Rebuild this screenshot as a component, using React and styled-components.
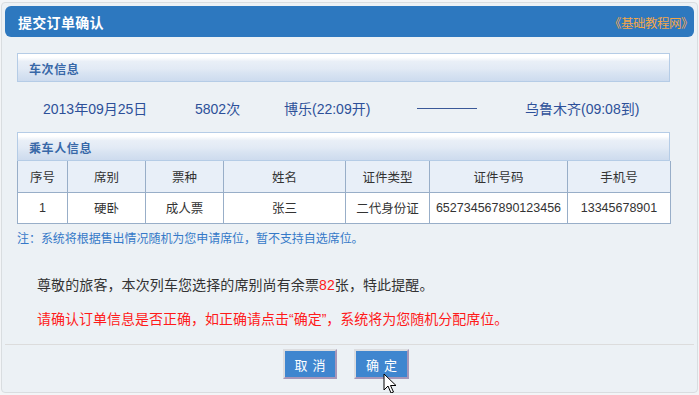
import React from "react";
import styled, { createGlobalStyle } from "styled-components";

const Global = createGlobalStyle`
  html, body { margin: 0; padding: 0; background: #f3f5f7; }
  body { font-family: "Liberation Sans", "Noto Sans CJK SC", sans-serif; }
  * { box-sizing: border-box; }
`;

const Dialog = styled.div`
  position: relative;
  margin: 2px 0 0 1px;
  width: 697px;
  height: 391px;
  background: #ecf1f5;
  border: 1px solid #d9dde0;
  border-radius: 4px;
  padding: 3px;
  display: flex;
  flex-direction: column;
`;

const TitleBar = styled.div`
  height: 31px;
  background: #2d78bf;
  border-radius: 6px;
  display: flex;
  align-items: center;
  justify-content: space-between;
  padding: 0 1px 0 13px;
`;

const Title = styled.span`
  color: #fff;
  font-size: 14px;
  font-weight: bold;
  letter-spacing: 0.3px;
`;

const SiteLink = styled.span`
  color: #f2a64a;
  font-size: 12.5px;
  font-family: "Noto Sans CJK SC", sans-serif;
  letter-spacing: -0.5px;
  margin-top: 2px;
`;

const Content = styled.div`
  padding: 16px 24px 0 12px;
  flex: 1;
`;

const SectionHead = styled.div`
  height: 29px;
  border: 1px solid #b5cce6;
  background: linear-gradient(#ffffff 0, #ffffff 12%, #e9eff7 28%, #e2eaf5 55%, #d9e4f2 70%, #cddbee 100%);
  display: flex;
  align-items: center;
  padding: 1px 0 0 11px;
  color: #3868a8;
  font-size: 12px;
  font-weight: bold;
  letter-spacing: 0.6px;
`;

const TrainRow = styled.div`
  height: 50px;
  display: grid;
  grid-template-columns: 152px 89px 133px 108px auto;
  align-items: center;
  padding: 2px 0 0 26px;
  color: #2d5099;
  font-size: 14px;
`;

const Dash = styled.span`
  display: block;
  width: 60px;
  height: 1px;
  background: #3a5898;
`;

const Table = styled.table`
  width: 100%;
  border-collapse: collapse;
  table-layout: fixed;
  font-size: 12.5px;
  color: #333;
  border: 1px solid #98aec8;
  border-top: none;
`;

const Th = styled.th`
  height: 31px;
  background: #e8eff8;
  font-weight: normal;
  border: 1px solid #98aec8;
  border-top: none;
  text-align: center;
  padding: 0;
`;

const Td = styled.td`
  height: 31px;
  background: #fff;
  border: 1px solid #98aec8;
  text-align: center;
  padding: 0;
`;

const Note = styled.div`
  margin-top: 7px;
  line-height: 16px;
  color: #3579c8;
  font-size: 12px;
  letter-spacing: -0.05px;
`;

const Message = styled.p`
  margin: ${(p) => p.$top}px 0 0 20px;
  line-height: 20px;
  font-size: 14px;
  letter-spacing: ${(p) => (p.$warn ? "0px" : "0.1px")};
  color: ${(p) => (p.$warn ? "#ff1a1a" : "#333")};
`;

const Red = styled.span`
  color: #ff1a1a;
`;

const Footer = styled.div`
  border-top: 1px solid #dcdcdc;
  height: 45px;
  display: flex;
  justify-content: center;
  align-items: flex-start;
  gap: 17px;
  padding: 4px 7px 0 0;
`;

const Button = styled.button`
  width: ${(p) => p.$w}px;
  height: 30px;
  background: #3f86cf;
  color: #fff;
  font-family: "Noto Sans CJK SC", sans-serif;
  font-size: 13px;
  letter-spacing: 5px;
  padding: 0 0 0 5px;
  border-style: solid;
  border-width: 2px;
  border-color: #dcdde0 #a796b8 #a796b8 #dcdde0;
  cursor: default;
`;

const Cursor = styled.svg`
  position: absolute;
  left: 381px;
  top: 370px;
`;

const cols = [50, 78, 78, 122, 84, 138, 103];
const heads = ["序号", "席别", "票种", "姓名", "证件类型", "证件号码", "手机号"];
const row = ["1", "硬卧", "成人票", "张三", "二代身份证", "652734567890123456", "13345678901"];

export default function App() {
  return (
    <>
      <Global />
      <Dialog>
        <TitleBar>
          <Title>提交订单确认</Title>
          <SiteLink>《基础教程网》</SiteLink>
        </TitleBar>
        <Content>
          <SectionHead>车次信息</SectionHead>
          <TrainRow>
            <span>2013年09月25日</span>
            <span>5802次</span>
            <span>博乐(22:09开)</span>
            <Dash />
            <span>乌鲁木齐(09:08到)</span>
          </TrainRow>
          <SectionHead>乘车人信息</SectionHead>
          <Table>
            <colgroup>
              {cols.map((w, i) => (
                <col key={i} style={{ width: w }} />
              ))}
            </colgroup>
            <thead>
              <tr>
                {heads.map((h) => (
                  <Th key={h}>{h}</Th>
                ))}
              </tr>
            </thead>
            <tbody>
              <tr>
                {row.map((c, i) => (
                  <Td key={i}>{c}</Td>
                ))}
              </tr>
            </tbody>
          </Table>
          <Note>注：系统将根据售出情况随机为您申请席位，暂不支持自选席位。</Note>
          <Message $top={28}>
            尊敬的旅客，本次列车您选择的席别尚有余票<Red>82</Red>张，特此提醒。
          </Message>
          <Message $top={14} $warn>
            请确认订单信息是否正确，如正确请点击“确定”，系统将为您随机分配席位。
          </Message>
        </Content>
        <Footer>
          <Button $w={54}>取消</Button>
          <Button $w={55}>确定</Button>
        </Footer>
        <Cursor width="14" height="22" viewBox="0 0 14 22">
          <path d="M1 1 L1 17 L5 13 L8 20 L10.5 19 L7.5 12.5 L13 12.5 Z" fill="#fff" stroke="#000" strokeWidth="1" strokeLinejoin="miter" />
        </Cursor>
      </Dialog>
    </>
  );
}
